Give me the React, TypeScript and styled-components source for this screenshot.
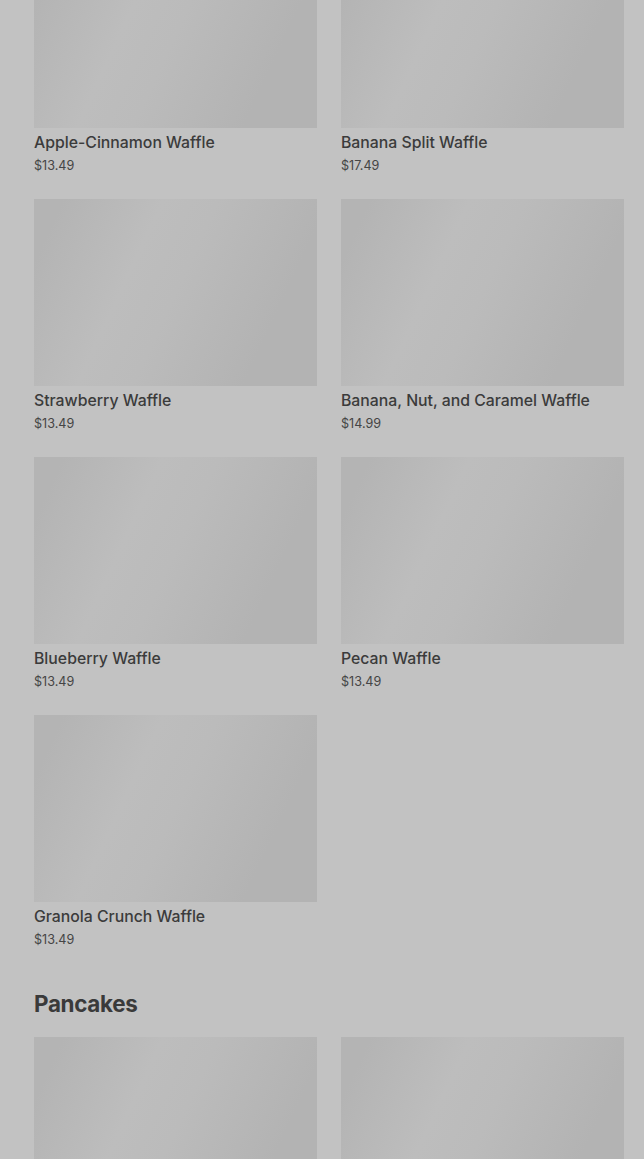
import React from 'react';
import styled, { createGlobalStyle } from 'styled-components';

type Item = { name: string; price: string };

const waffles: Item[] = [
  { name: 'Apple-Cinnamon Waffle', price: '$13.49' },
  { name: 'Banana Split Waffle', price: '$17.49' },
  { name: 'Strawberry Waffle', price: '$13.49' },
  { name: 'Banana, Nut, and Caramel Waffle', price: '$14.99' },
  { name: 'Blueberry Waffle', price: '$13.49' },
  { name: 'Pecan Waffle', price: '$13.49' },
  { name: 'Granola Crunch Waffle', price: '$13.49' },
];

const pancakes: Item[] = [
  { name: 'Buttermilk Pancakes', price: '$11.99' },
  { name: 'Blueberry Pancakes', price: '$12.99' },
];

const GlobalStyle = createGlobalStyle`
  html, body {
    margin: 0;
    padding: 0;
    background: #c2c2c2;
    overflow: hidden;
  }
  body {
    font-family: Inter, "Noto Sans", sans-serif;
    color: #3b3b3b;
  }
`;

const Page = styled.main`
  height: 1159px;
  overflow: hidden;
  padding: 0 20px 0 34px;
`;

// the menu is scrolled, so the first row is cut off at the top
const Scroller = styled.div`
  margin-top: -59px;
  display: flex;
  flex-direction: column;
  gap: 40px;
`;

const Section = styled.section`
  display: flex;
  flex-direction: column;
`;

const Heading = styled.h2`
  margin: 0 0 18px;
  font-size: 22.4px;
  line-height: 30px;
  font-weight: 700;
  letter-spacing: -0.3px;
  color: #3a3a3a;
`;

const Grid = styled.div`
  display: grid;
  grid-template-columns: 1fr 1fr;
  column-gap: 24px;
  row-gap: 24px;
`;

const Card = styled.article`
  display: flex;
  flex-direction: column;
`;

const Thumb = styled.div`
  height: 187px;
  background: linear-gradient(
    115deg,
    #b4b4b4 8%,
    #bdbdbd 35%,
    #bbbbbb 50%,
    #b3b3b3 80%
  );
`;

const Name = styled.h3`
  margin: 5px 0 0;
  font-size: 15.8px;
  line-height: 20px;
  font-weight: 500;
  color: #3b3b3b;
  white-space: nowrap;
`;

const Price = styled.span`
  margin-top: 3px;
  font-size: 12.6px;
  line-height: 19px;
  color: #454545;
`;

const MenuCard: React.FC<{ item: Item }> = ({ item }) => (
  <Card>
    <Thumb />
    <Name>{item.name}</Name>
    <Price>{item.price}</Price>
  </Card>
);

export default function App() {
  return (
    <>
      <GlobalStyle />
      <Page>
        <Scroller>
          <Section>
            <Grid>
              {waffles.map((w) => (
                <MenuCard key={w.name} item={w} />
              ))}
            </Grid>
          </Section>
          <Section>
            <Heading>Pancakes</Heading>
            <Grid>
              {pancakes.map((p) => (
                <MenuCard key={p.name} item={p} />
              ))}
            </Grid>
          </Section>
        </Scroller>
      </Page>
    </>
  );
}
